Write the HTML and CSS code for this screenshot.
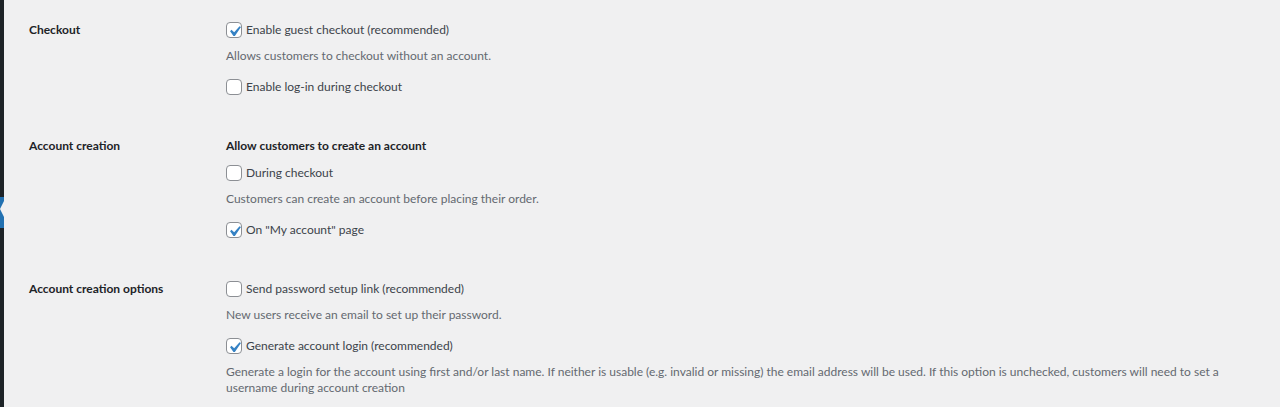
FILE: index.html
```html
<!DOCTYPE html>
<html lang="en">
<head>
<meta charset="utf-8">
<title>Accounts &amp; Privacy</title>
<link rel="stylesheet" href="styles.css">
</head>
<body>
<div class="screen">
  <div class="menu-edge">
    <span class="menu-current"></span>
  </div>
  <main class="content">
    <section class="setting">
      <div class="setting-label">Checkout</div>
      <div class="setting-field">
        <label class="option"><span class="box is-checked"><svg viewBox="0 0 20 20"><path d="M14.83 4.89l1.34.94-5.810 8.38H9.02L5.78 9.67l1.34-1.25 2.57 2.4z"/></svg></span>Enable guest checkout (recommended)</label>
        <p class="description">Allows customers to checkout without an account.</p>
        <label class="option"><span class="box"></span>Enable log-in during checkout</label>
      </div>
    </section>

    <section class="setting">
      <div class="setting-label">Account creation</div>
      <div class="setting-field">
        <div class="field-heading">Allow customers to create an account</div>
        <label class="option"><span class="box"></span>During checkout</label>
        <p class="description">Customers can create an account before placing their order.</p>
        <label class="option"><span class="box is-checked"><svg viewBox="0 0 20 20"><path d="M14.83 4.89l1.34.94-5.81 8.38H9.02L5.78 9.67l1.34-1.25 2.57 2.4z"/></svg></span>On "My account" page</label>
      </div>
    </section>

    <section class="setting">
      <div class="setting-label">Account creation options</div>
      <div class="setting-field">
        <label class="option"><span class="box"></span>Send password setup link (recommended)</label>
        <p class="description">New users receive an email to set up their password.</p>
        <label class="option"><span class="box is-checked"><svg viewBox="0 0 20 20"><path d="M14.83 4.89l1.34.94-5.81 8.38H9.02L5.78 9.67l1.34-1.25 2.57 2.4z"/></svg></span>Generate account login (recommended)</label>
        <p class="description">Generate a login for the account using first and/or last name. If neither is usable (e.g. invalid or missing) the email address will be used. If this option is unchecked, customers will need to set a username during account creation</p>
      </div>
    </section>
  </main>
</div>
</body>
</html>
```

FILE: styles.css
```css
html, body {
  margin: 0;
  height: 100%;
}

body {
  background: #f0f0f1;
  color: #3c434a;
  font-family: Lato, "Open Sans", sans-serif;
  font-size: 12px;
  overflow: hidden;
}

.screen {
  display: flex;
  min-height: 100%;
}

/* right edge of the admin menu, with the current item marker */
.menu-edge {
  width: 4px;
  flex: none;
  background: #1d2327;
  display: flex;
  flex-direction: column;
  padding-top: 197px;
}

.menu-current {
  position: relative;
  height: 31px;
  background: #2271b1;
}

.menu-current::after {
  content: "";
  position: absolute;
  right: 0;
  top: 4px;
  border: 8px solid transparent;
  border-right: 4px solid #f0f0f1;
  border-left: 0;
}

.content {
  flex: 1;
  padding: 0 22px 0 25px;
}

.setting {
  display: grid;
  grid-template-columns: 197px 1fr;
  padding: 20px 0 19px;
}

.setting-label {
  color: #1d2327;
  font-weight: 700;
  line-height: 20px;
}

.setting-field {
  display: flex;
  flex-direction: column;
}

.field-heading {
  color: #1d2327;
  font-weight: 700;
  line-height: 20px;
  margin-bottom: 7px;
}

.option {
  display: flex;
  align-items: center;
  height: 20px;
  line-height: 20px;
}

.box {
  position: relative;
  flex: none;
  width: 16px;
  height: 16px;
  box-sizing: border-box;
  border: 1px solid #8c8f94;
  border-radius: 4px;
  background: #fff;
  margin-right: 4px;
}

.box svg {
  position: absolute;
  left: -3px;
  top: -2px;
  width: 21px;
  height: 21px;
  fill: #3582c4;
}

.description {
  margin: 8px 0 13px;
  color: #646970;
  line-height: 16px;
}

.description:last-child {
  margin-bottom: 0;
}
```
